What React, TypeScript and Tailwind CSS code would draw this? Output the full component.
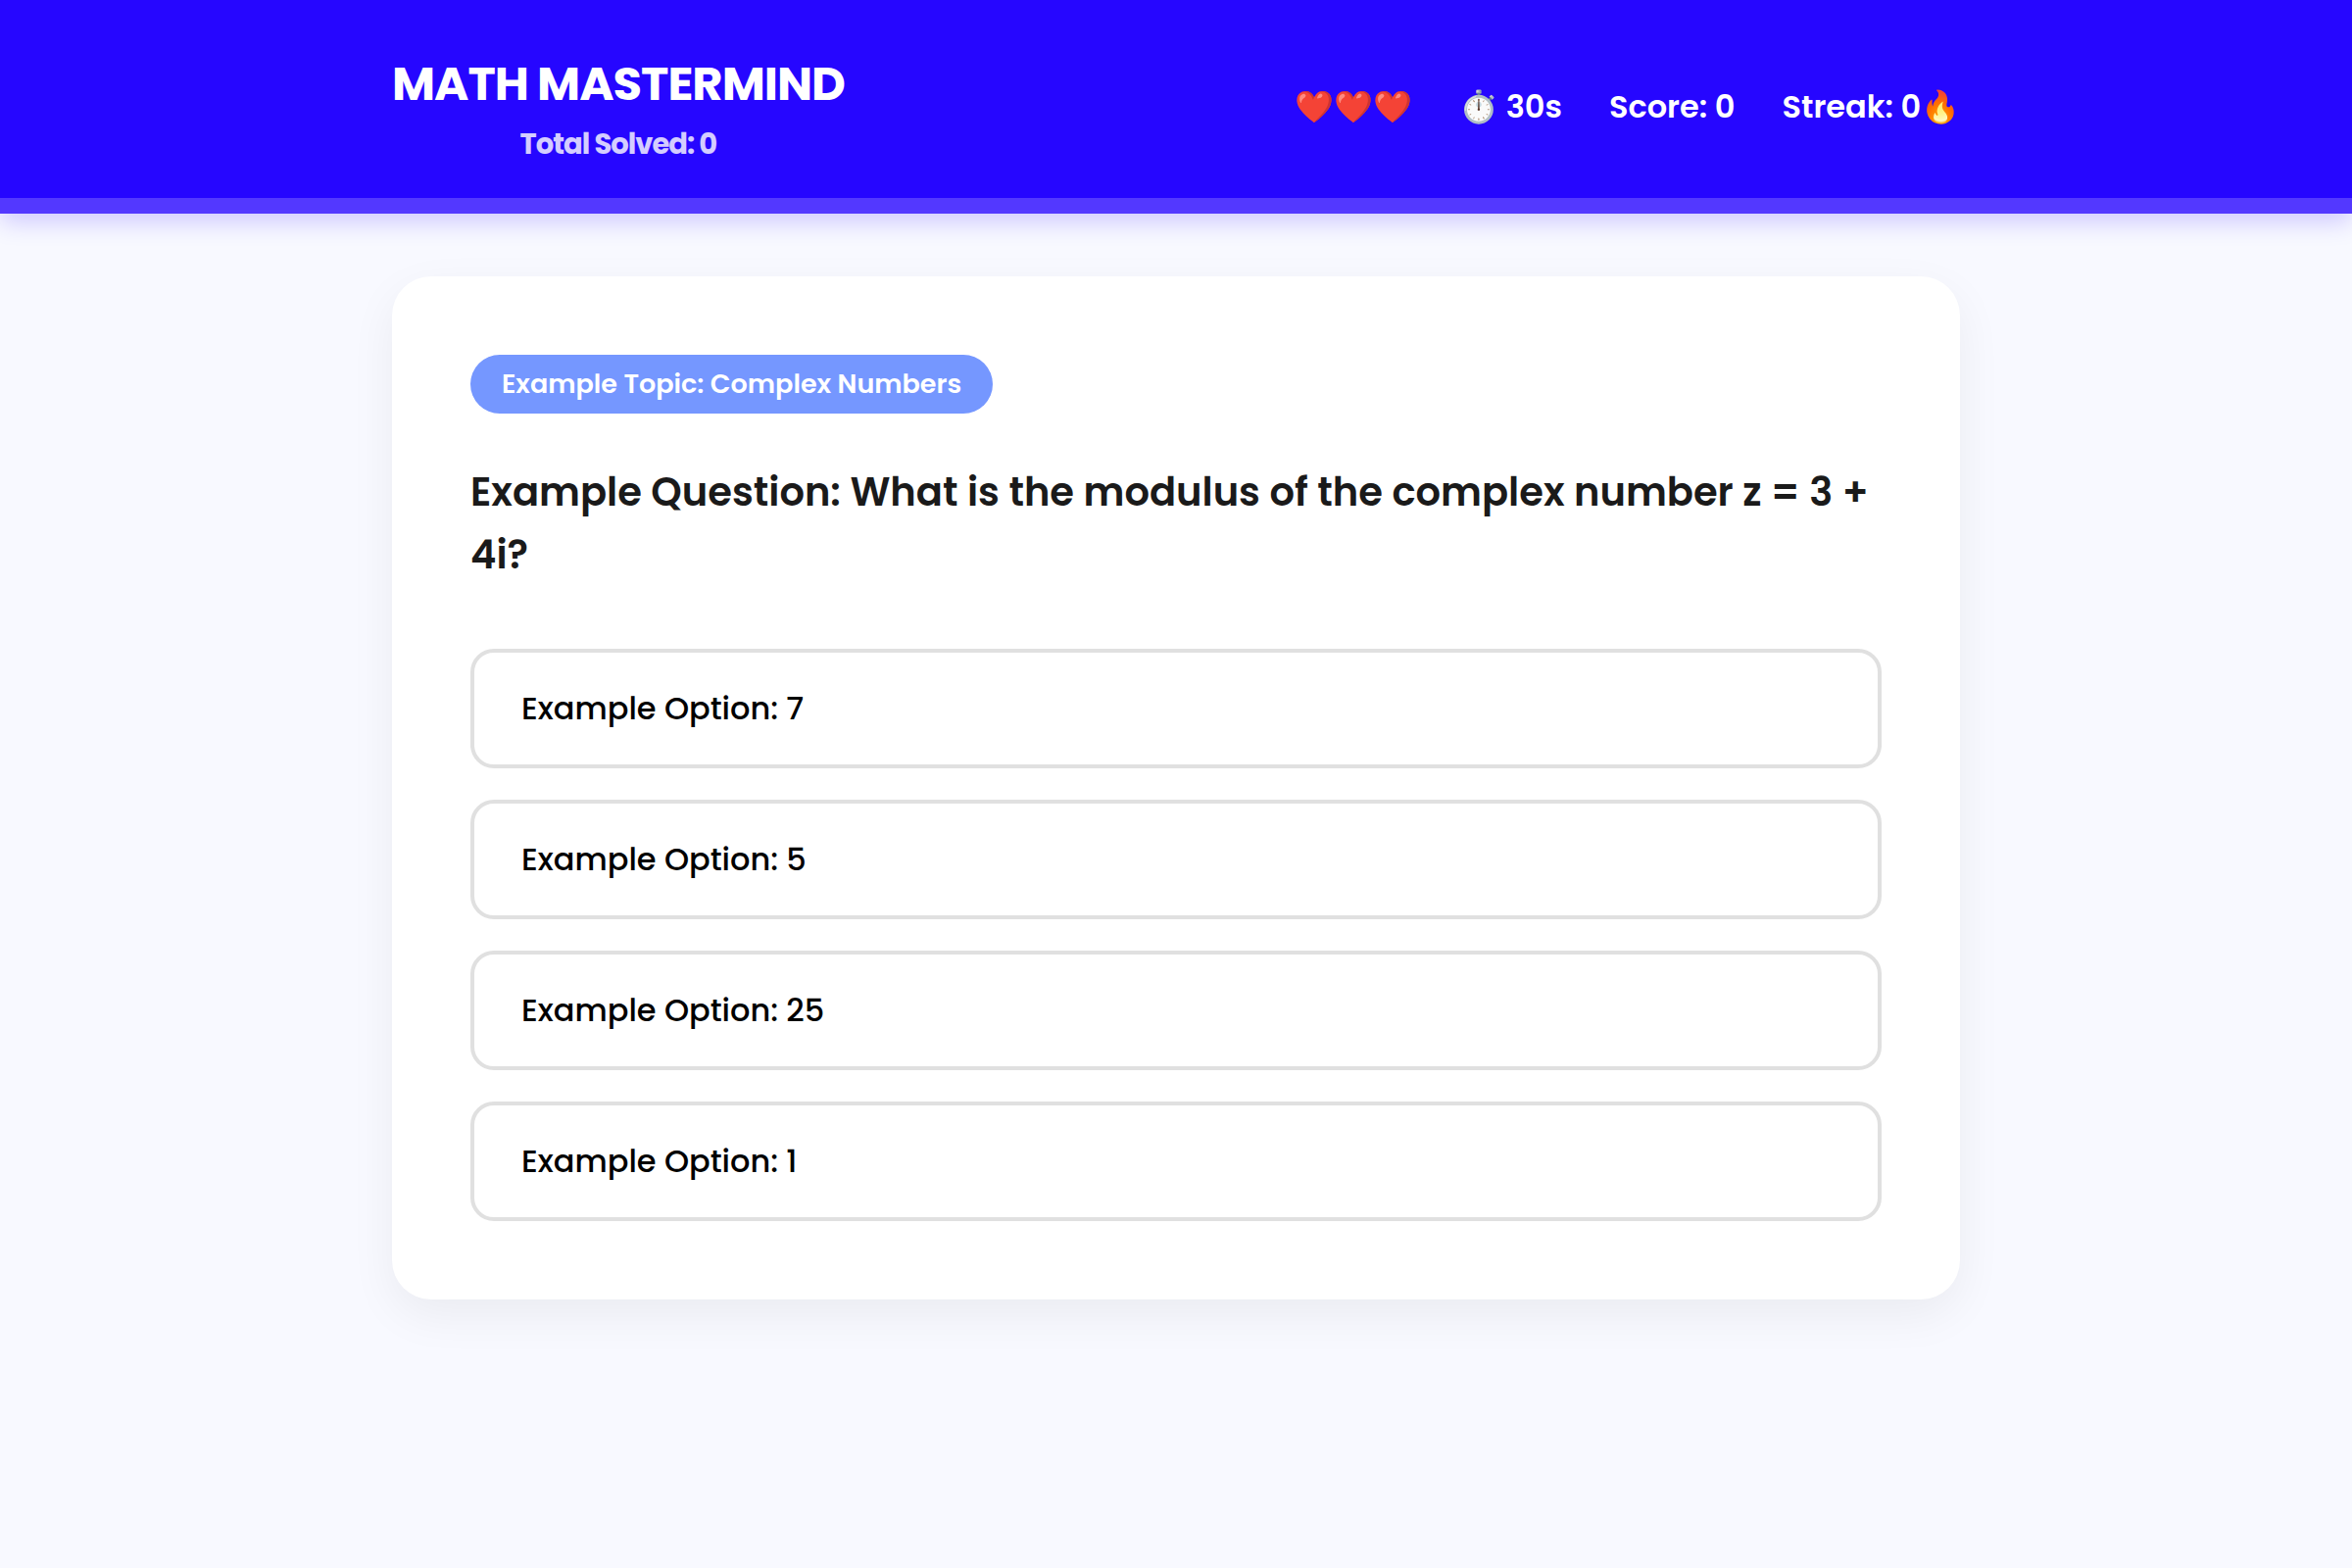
interface Question {
  topic: string
  text: string
  options: string[]
}

const question: Question = {
  topic: "Example Topic: Complex Numbers",
  text: "Example Question: What is the modulus of the complex number z = 3 + 4i?",
  options: [
    "Example Option: 7",
    "Example Option: 5",
    "Example Option: 25",
    "Example Option: 1",
  ],
}

function Header() {
  return (
    <header className="border-b-16 border-[#5338ff] bg-[#2606ff] px-10 shadow-[0_8px_24px_rgba(38,6,255,0.2)]">
      <div className="mx-auto flex max-w-[1600px] items-center justify-between pt-12 pb-8">
        <h1 className="text-center text-5xl leading-[76px] font-bold tracking-[-1px] text-white">
          MATH MASTERMIND
          <span className="block text-[29px] leading-[46px] text-white/80">Total Solved: 0</span>
        </h1>
        <div className="flex gap-12 text-[32px] leading-[48px] font-semibold text-white">
          <div>❤️❤️❤️</div>
          <div>⏱️ 30s</div>
          <div>Score: 0</div>
          <div>Streak: 0🔥</div>
        </div>
      </div>
    </header>
  )
}

function QuestionCard({ topic, text, options }: Question) {
  return (
    <section className="mx-auto max-w-[1600px] rounded-[40px] bg-white p-20 shadow-[0_16px_48px_rgba(0,0,0,0.06)]">
      <div className="flex">
        <span className="rounded-full bg-[#7597ff] px-8 py-2 text-[27px] leading-[44px] font-semibold text-white">
          {topic}
        </span>
      </div>
      <h2 className="mt-12 mb-16 text-[40px] leading-[64px] font-semibold text-[#1a1a1a]">
        {text}
      </h2>
      <div className="grid gap-8">
        {options.map((option) => (
          <button
            key={option}
            type="button"
            className="rounded-3xl border-4 border-[#e0e0e0] bg-white px-12 py-8 text-left text-[32px] leading-[50px] font-medium text-black"
          >
            {option}
          </button>
        ))}
      </div>
    </section>
  )
}

export default function App() {
  return (
    <div className="min-h-screen bg-[#f8f9ff] font-['Poppins','Inter','Noto_Color_Emoji',sans-serif]">
      <Header />
      <main className="px-10 py-16">
        <QuestionCard {...question} />
      </main>
    </div>
  )
}
